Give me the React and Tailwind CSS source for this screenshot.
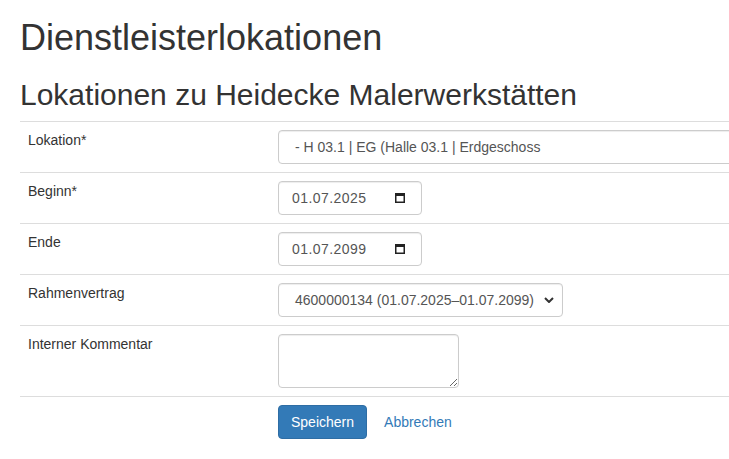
import React from "react";

const CalendarIcon = () => (
  <svg width="10" height="11" viewBox="0 0 10 11" className="text-[#222]">
    <rect x="0.75" y="1.75" width="8.5" height="8.5" fill="none" stroke="currentColor" strokeWidth="1.5" />
    <rect x="0" y="1" width="10" height="3" fill="currentColor" />
  </svg>
);

const Chevron = () => (
  <svg width="10" height="6" viewBox="0 0 10 6" className="text-[#333]">
    <path d="M1 1l4 4 4-4" fill="none" stroke="currentColor" strokeWidth="2" />
  </svg>
);

const DateField = ({ value }) => (
  <div className="flex h-[34px] w-[144px] items-center justify-between rounded-[4px] border border-[#ccc] bg-white pl-[13px] pr-[16px] text-[14px] tracking-[0.45px] text-[#555] shadow-[inset_0_1px_1px_rgba(0,0,0,0.075)]">
    <span>{value}</span>
    <CalendarIcon />
  </div>
);

const Row = ({ label, children }) => (
  <tr className="border-t border-[#ddd] align-top">
    <td className="w-[250px] p-2 leading-5">{label}</td>
    <td className="p-2">{children}</td>
  </tr>
);

export default function App() {
  return (
    <div
      className="min-h-[459px] overflow-hidden bg-white pl-[20px] text-[14px] leading-5 text-[#333]"
      style={{ fontFamily: '"Liberation Sans", Arial, sans-serif' }}
    >
      <h1 className="mt-[18px] mb-[10px] text-[36px] leading-[1.1] font-normal">
        Dienstleisterlokationen
      </h1>
      <h2 className="mt-[20px] mb-[10px] text-[30px] leading-[1.1] font-normal">
        Lokationen zu Heidecke Malerwerkstätten
      </h2>
      <table className="w-[800px] border-collapse">
        <tbody>
          <Row label="Lokation*">
            <div className="flex h-[34px] w-full items-center rounded-[4px] border border-[#ccc] bg-white pl-[16px] text-[#555] shadow-[inset_0_1px_1px_rgba(0,0,0,0.075)]">
              - H 03.1 | EG (Halle 03.1 | Erdgeschoss
            </div>
          </Row>
          <Row label="Beginn*">
            <DateField value="01.07.2025" />
          </Row>
          <Row label="Ende">
            <DateField value="01.07.2099" />
          </Row>
          <Row label="Rahmenvertrag">
            <div className="flex h-[34px] w-[285px] items-center justify-between rounded-[4px] border border-[#ccc] bg-white pl-[16px] pr-[8px] text-[#555] shadow-[inset_0_1px_1px_rgba(0,0,0,0.075)]">
              <span>4600000134 (01.07.2025–01.07.2099)</span>
              <Chevron />
            </div>
          </Row>
          <Row label="Interner Kommentar">
            <textarea className="block h-[54px] w-[181px] rounded-[4px] border border-[#ccc] bg-white px-3 py-[6px] text-[#555] shadow-[inset_0_1px_1px_rgba(0,0,0,0.075)] outline-none" />
          </Row>
          <tr className="border-t border-[#ddd]">
            <td className="w-[250px] p-2"></td>
            <td className="p-2">
              <div className="flex items-center">
                <button className="h-[34px] rounded-[4px] border border-[#2e6da4] bg-[#337ab7] px-3 text-[14px] text-white">
                  Speichern
                </button>
                <a className="ml-[5px] px-3 leading-[34px] text-[#337ab7]" href="#">
                  Abbrechen
                </a>
              </div>
            </td>
          </tr>
        </tbody>
      </table>
    </div>
  );
}
